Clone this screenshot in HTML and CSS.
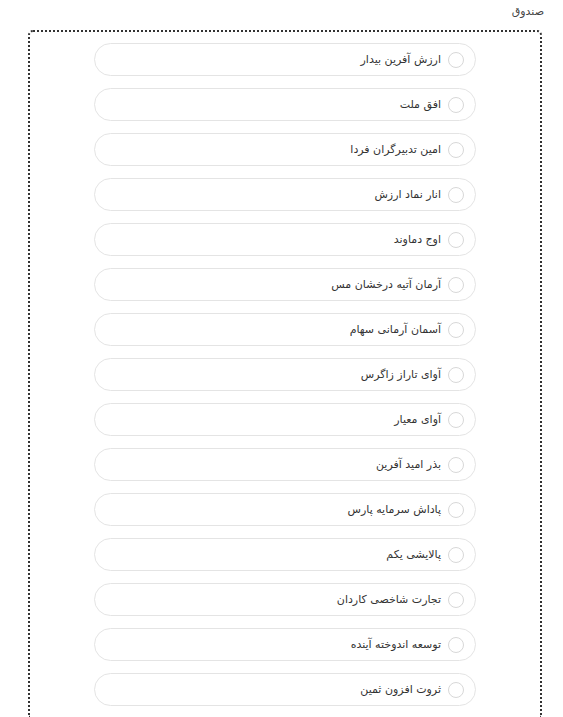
FILE: index.html
```html
<!DOCTYPE html>
<html lang="fa" dir="rtl">
<head>
  <meta charset="UTF-8">
  <meta name="viewport" content="width=device-width, initial-scale=1.0">
  <title>صندوق</title>
  <link rel="stylesheet" href="styles.css">
</head>
<body>
  <div class="wrapper">
    <div class="field-label">صندوق</div>
    <div class="fund-box">
      <label class="option"><input type="radio" name="fund"><span class="dot"></span><span>ارزش آفرین بیدار</span></label>
      <label class="option"><input type="radio" name="fund"><span class="dot"></span><span>افق ملت</span></label>
      <label class="option"><input type="radio" name="fund"><span class="dot"></span><span>امین تدبیرگران فردا</span></label>
      <label class="option"><input type="radio" name="fund"><span class="dot"></span><span>انار نماد ارزش</span></label>
      <label class="option"><input type="radio" name="fund"><span class="dot"></span><span>اوج دماوند</span></label>
      <label class="option"><input type="radio" name="fund"><span class="dot"></span><span>آرمان آتیه درخشان مس</span></label>
      <label class="option"><input type="radio" name="fund"><span class="dot"></span><span>آسمان آرمانی سهام</span></label>
      <label class="option"><input type="radio" name="fund"><span class="dot"></span><span>آوای تاراز زاگرس</span></label>
      <label class="option"><input type="radio" name="fund"><span class="dot"></span><span>آوای معیار</span></label>
      <label class="option"><input type="radio" name="fund"><span class="dot"></span><span>بذر امید آفرین</span></label>
      <label class="option"><input type="radio" name="fund"><span class="dot"></span><span>پاداش سرمایه پارس</span></label>
      <label class="option"><input type="radio" name="fund"><span class="dot"></span><span>پالایشی یکم</span></label>
      <label class="option"><input type="radio" name="fund"><span class="dot"></span><span>تجارت شاخصی کاردان</span></label>
      <label class="option"><input type="radio" name="fund"><span class="dot"></span><span>توسعه اندوخته آینده</span></label>
      <label class="option"><input type="radio" name="fund"><span class="dot"></span><span>ثروت افزون ثمین</span></label>
    </div>
  </div>
</body>
</html>
```

FILE: styles.css
```css
body {
  font-family: "DejaVu Sans", Tahoma, sans-serif;
  background-color: #fff;
  color: #333;
  margin: 0;
  padding: 0;
}

.wrapper {
  width: 514px;
  margin-right: 21px;
  padding-top: 4px;
}

.field-label {
  font-size: 11px;
  color: #444;
  height: 26px;
  line-height: 16px;
  margin-right: -2px;
}

.fund-box {
  border: 2px dotted #333;
  border-bottom: none;
  border-radius: 5px 5px 0 0;
  padding-top: 11px;
  padding-bottom: 12px;
  display: flex;
  flex-direction: column;
  align-items: center;
  gap: 12px;
}

.option {
  width: 382px;
  height: 33px;
  box-sizing: border-box;
  border: 1px solid #e4e4e4;
  border-radius: 17px;
  display: flex;
  align-items: center;
  padding-right: 11px;
  font-size: 11px;
  color: #333;
  cursor: pointer;
}

.option input {
  display: none;
}

.dot {
  width: 16px;
  height: 16px;
  box-sizing: border-box;
  border: 1px solid #d8d8d8;
  border-radius: 50%;
  margin-left: 7px;
  flex-shrink: 0;
}
```
